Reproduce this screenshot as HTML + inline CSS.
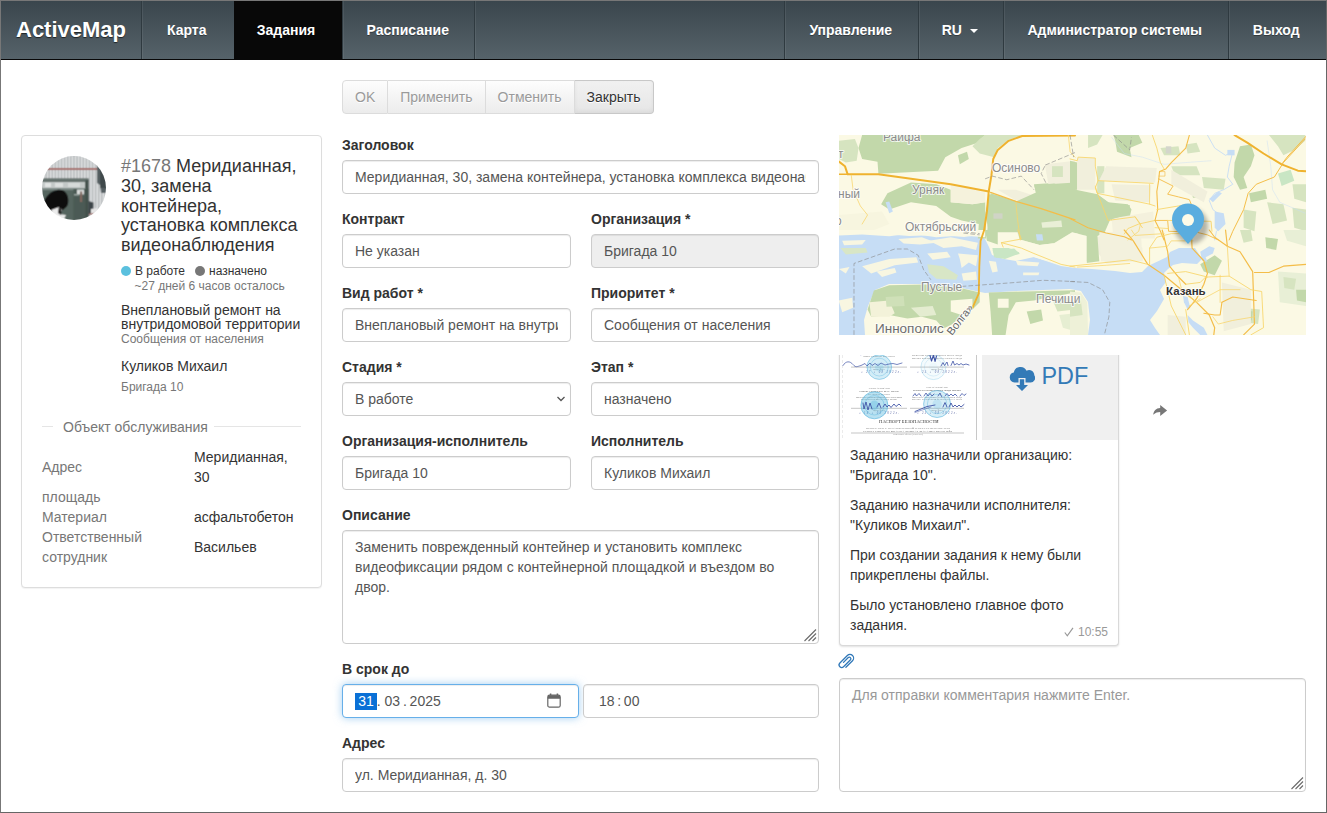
<!DOCTYPE html>
<html lang="ru">
<head>
<meta charset="utf-8">
<title>ActiveMap</title>
<style>
*{box-sizing:border-box}
html,body{margin:0;padding:0}
body{width:1327px;height:813px;overflow:hidden;position:relative;background:#fff;
 font-family:"Liberation Sans",Arial,sans-serif;font-size:14px;line-height:20px;color:#333}
#frame{position:absolute;left:0;top:0;width:1327px;height:813px;border:1px solid #777;border-right-color:#666;border-bottom-color:#666;pointer-events:none;z-index:50}
/* NAVBAR */
#nav{position:absolute;left:1px;top:1px;width:1325px;height:59px;border-bottom:1px solid #080808;
 background:linear-gradient(#3a464d 0%,#56636a 100%)}
#nav .brand{position:absolute;left:0;top:0;height:58px;width:141px;padding:0 0 0 15px;line-height:58px;
 font-size:22px;font-weight:bold;color:#fff;text-shadow:0 1px 1px rgba(0,0,0,.6)}
#nav .it{position:absolute;top:0;height:58px;padding-right:2.5px;line-height:58px;text-align:center;color:#fff;font-weight:bold;font-size:14px;
 border-left:1px solid #2f3a40;box-shadow:inset 1px 0 0 rgba(255,255,255,.07);text-shadow:0 1px 0 rgba(0,0,0,.35)}
#nav .it.act{background:#080808;box-shadow:none;border-left-color:#080808}
.caret{display:inline-block;width:0;height:0;margin-left:4px;vertical-align:middle;border-top:4px solid #fff;border-right:4px solid transparent;border-left:4px solid transparent}
/* BUTTONS */
#btns{position:absolute;left:342px;top:80px;height:34px;display:flex}
#btns .b{height:34px;line-height:32px;padding:0 12px;border:1px solid #ccc;border-left-width:0;font-size:14px;color:#333;
 background:linear-gradient(#fff 0%,#e0e0e0 100%);text-shadow:0 1px 0 #fff;white-space:nowrap}
#btns .b:first-child{border-left-width:1px;border-radius:4px 0 0 4px}
#btns .b:last-child{border-radius:0 4px 4px 0}
#btns .b.dis{color:#9a9a9a;background:linear-gradient(#fdfdfd 0%,#ececec 100%);border-color:#dcdcdc}
#btns .b.cl{background:linear-gradient(#f1f1f1,#e6e6e6);border-color:#c8c8c8;padding-right:13px;box-shadow:inset 0 -2px 4px rgba(0,0,0,.05)}
/* FORM */
.lbl{position:absolute;font-weight:bold;height:20px;line-height:20px;white-space:nowrap;color:#333}
.inp{position:absolute;height:34px;border:1px solid #ccc;border-radius:4px;background:#fff;padding:6px 12px;line-height:20px;color:#555;
 box-shadow:inset 0 1px 1px rgba(0,0,0,.075);white-space:nowrap;overflow:hidden}
.inp.ro{background:#eee}
.inp .c{display:block;overflow:hidden;white-space:nowrap;height:20px}

/* LEFT PANEL */
#lp{position:absolute;left:21px;top:135px;width:301px;height:453px;border:1px solid #ddd;border-radius:4px;background:#fff;box-shadow:0 1px 1px rgba(0,0,0,.05)}
#lp .t{position:absolute;white-space:nowrap}
#lp h4{position:absolute;left:99px;top:21px;margin:0;font-size:18px;line-height:19.8px;font-weight:normal;color:#333;white-space:nowrap}
#lp h4 span{color:#777}
.mut{color:#777}
.s12{font-size:12px}
.dot{display:inline-block;width:10px;height:10px;border-radius:50%;vertical-align:-1px;margin-right:4px}
#lp .lg{position:absolute;left:20px;top:282px;width:259px;height:20px}
#lp .lg i{position:absolute;top:8px;height:1px;background:#e5e5e5}
#lp .k{color:#777}

/* FORM extras */
.ta{position:absolute;border:1px solid #ccc;border-radius:4px;background:#fff;padding:6px 12px;line-height:20px;color:#555;box-shadow:inset 0 1px 1px rgba(0,0,0,.075)}
.grip{position:absolute;right:1px;bottom:1px;width:15px;height:15px}
.inp.foc{border-color:#66afe9;box-shadow:inset 0 1px 1px rgba(0,0,0,.075),0 0 8px rgba(102,175,233,.6)}
.sel{background:#0a70d6;color:#fff;display:inline-block;height:17px;line-height:17px;margin-top:2px;padding:0 3px;margin-left:0.2px;vertical-align:top}

/* RIGHT */
#bub{position:absolute;left:839px;top:345px;width:280px;height:301px;border:1px solid #d9d9d9;border-top:0;border-radius:0 0 4px 4px;background:#fff;box-shadow:0 1px 2px rgba(0,0,0,.12)}
#clipb{position:absolute;left:830px;top:355px;width:300px;height:300px;overflow:hidden}
#clipb #bub{left:9px;top:-10px}
#bub p{position:absolute;left:10px;margin:0;white-space:nowrap;color:#333;line-height:20px}
#bub .tm{position:absolute;right:10px;bottom:5px;font-size:12px;color:#999;line-height:16px}
#cmt{position:absolute;left:839px;top:678px;width:467px;height:114px;border:1px solid #ccc;border-radius:4px;background:#fff;box-shadow:inset 0 1px 1px rgba(0,0,0,.075);padding:6px 12px;color:#999;line-height:20px}
</style>
</head>
<body>
<div id="nav">
 <div class="brand">ActiveMap</div>
 <div class="it" style="left:140px;width:93px">Карта</div>
 <div class="it act" style="left:233px;width:108px;padding-right:5px">Задания</div>
 <div class="it" style="left:341px;width:133px">Расписание</div>
 <div class="it" style="left:473px;width:310px"></div>
 <div class="it" style="left:783px;width:135px">Управление</div>
 <div class="it" style="left:917px;width:85px">RU <span class="caret"></span></div>
 <div class="it" style="left:1002px;width:225px">Администратор системы</div>
 <div class="it" style="left:1227px;width:98px">Выход</div>
</div>

<div id="btns"><div class="b dis">OK</div><div class="b dis">Применить</div><div class="b dis">Отменить</div><div class="b cl">Закрыть</div></div>

<div id="lp">
 <svg style="position:absolute;left:20px;top:20px" width="64" height="64" viewBox="0 0 64 64">
  <defs><clipPath id="av"><circle cx="32" cy="32" r="32"/></clipPath>
  <filter id="bl" x="-10%" y="-10%" width="120%" height="120%"><feConvolveMatrix order="3" kernelMatrix="1 2 1 2 6 2 1 2 1" divisor="18" edgeMode="duplicate" preserveAlpha="true"/></filter></defs>
  <g clip-path="url(#av)"><g filter="url(#bl)">
   <rect x="-4" y="-4" width="72" height="72" fill="#b3b7b9"/>
   <path d="M2.5 0v64M5.6 0v64M8.7 0v64M11.8 0v64M14.9 0v64M18.0 0v64M21.1 0v64M24.2 0v64M27.3 0v64M30.400000000000002 0v64M33.5 0v64M36.6 0v64M39.7 0v64M42.800000000000004 0v64M45.9 0v64M49.0 0v64M52.1 0v64M55.2 0v64M58.300000000000004 0v64M61.4 0v64M64.5 0v64" stroke="#e4e6e7" stroke-width="1.5" fill="none"/>
   <rect x="5" y="12" width="51" height="2" fill="#a56b66"/>
   <path d="M55 9h10v28h-6l-1-8l-3-2z" fill="#566064"/>
   <rect x="58" y="14" width="6" height="18" fill="#3f484b"/>
   <rect x="0" y="22.5" width="46.5" height="44" fill="#55655f"/>
   <rect x="0" y="22.5" width="46.5" height="3" fill="#66736f"/>
   <rect x="0" y="26" width="43" height="6" fill="#c3c8c7"/>
   <rect x="3" y="27" width="6" height="4" fill="#e2e5e4"/><rect x="13" y="27" width="8" height="4" fill="#dde0df"/><rect x="26" y="27" width="12" height="4" fill="#d6dad9"/>
   <rect x="0" y="32" width="46.5" height="2.2" fill="#7d8a86"/>
   <rect x="31.5" y="33" width="15" height="32" fill="#4b5a55"/>
   <rect x="43.5" y="24" width="3" height="41" fill="#43504c"/>
   <rect x="35" y="33.5" width="7" height="5" fill="#d9dcdb"/>
   <rect x="38" y="35.5" width="2.2" height="10.5" fill="#80675f"/>
   <rect x="32" y="38" width="5" height="1.5" fill="#9aa5a1"/>
   <path d="M46.5 45l5 1.5v11l-5 1z" fill="#3d4548"/>
   <path d="M49 53l6-1l1 4l-7 2z" fill="#e6e6e6"/>
   <rect x="47" y="57.500" width="8" height="1.200" fill="#b0736c"/>
   <path d="M0 60 C-1 48 4 36 15 34 C24 32.500 27.500 40 26 48 C25 52 20 54 18 56 L23 66 L0 66Z" fill="#0d0d0e"/>
   <path d="M9 54l8-3l3 3l-3 4l7 1l-2 4l-9-1z" fill="#ececec"/>
   <path d="M17 50c2 2 3 5 2 9l-3-2z" fill="#1a1a1a"/>
  </g></g>
 </svg>
 <h4><span>#1678</span> Меридианная,<br>30, замена<br>контейнера,<br>установка комплекса<br>видеонаблюдения</h4>
 <div class="t s12" style="left:99px;top:125px;color:#333"><span class="dot" style="background:#5bc0de"></span>В работе</div>
 <div class="t s12" style="left:173px;top:125px;color:#333"><span class="dot" style="background:#777"></span>назначено</div>
 <div class="t s12 mut" style="left:112.500px;top:140px">~27 дней 6 часов осталось</div>
 <div class="t" style="left:99px;top:167px;line-height:14px">Внеплановый ремонт на<br>внутридомовой территории</div>
 <div class="t s12 mut" style="left:99px;top:193px">Сообщения от населения</div>
 <div class="t" style="left:99px;top:220px">Куликов Михаил</div>
 <div class="t s12 mut" style="left:99px;top:241px">Бригада 10</div>
 <div class="lg"><i style="left:0;width:11px"></i><i style="left:172px;width:87px"></i><div class="t mut" style="left:21px;top:-1px">Объект обслуживания</div></div>
 <div class="t k" style="left:20px;top:321px">Адрес</div>
 <div class="t" style="left:172px;top:311px">Меридианная,<br>30</div>
 <div class="t k" style="left:20px;top:351px">площадь</div>
 <div class="t k" style="left:20px;top:371px">Материал</div>
 <div class="t" style="left:172px;top:371px">асфальтобетон</div>
 <div class="t k" style="left:20px;top:391px">Ответственный<br>сотрудник</div>
 <div class="t" style="left:172px;top:401px">Васильев</div>
</div>

<div class="lbl" style="left:342px;top:135px">Заголовок</div>
<div class="inp" style="left:342px;top:160px;width:477px"><span class="c">Меридианная, 30, замена контейнера, установка комплекса видеонаблюдения</span></div>
<div class="lbl" style="left:342px;top:209px">Контракт</div>
<div class="inp" style="left:342px;top:234px;width:229px"><span class="c">Не указан</span></div>
<div class="lbl" style="left:591px;top:209px">Организация *</div>
<div class="inp ro" style="left:591px;top:234px;width:228px"><span class="c">Бригада 10</span></div>
<div class="lbl" style="left:342px;top:283px">Вид работ *</div>
<div class="inp" style="left:342px;top:308px;width:229px"><span class="c">Внеплановый ремонт на внутридомовой территории</span></div>
<div class="lbl" style="left:591px;top:283px">Приоритет *</div>
<div class="inp" style="left:591px;top:308px;width:228px"><span class="c">Сообщения от населения</span></div>
<div class="lbl" style="left:342px;top:357px">Стадия *</div>
<div class="inp" style="left:342px;top:382px;width:229px">В работе<svg style="position:absolute;right:4px;top:12px" width="10" height="8" viewBox="0 0 10 8"><path d="M1.500 2L5 5.500L8.500 2" stroke="#555" stroke-width="1.300" fill="none"/></svg></div>
<div class="lbl" style="left:591px;top:357px">Этап *</div>
<div class="inp" style="left:591px;top:382px;width:228px"><span class="c">назначено</span></div>
<div class="lbl" style="left:342px;top:431px">Организация-исполнитель</div>
<div class="inp" style="left:342px;top:456px;width:229px"><span class="c">Бригада 10</span></div>
<div class="lbl" style="left:591px;top:431px">Исполнитель</div>
<div class="inp" style="left:591px;top:456px;width:228px"><span class="c">Куликов Михаил</span></div>
<div class="lbl" style="left:342px;top:505px">Описание</div>
<div class="ta" style="left:342px;top:530px;width:477px;height:114px">Заменить поврежденный контейнер и установить комплекс<br>видеофиксации рядом с контейнерной площадкой и въездом во<br>двор.<svg class="grip" viewBox="0 0 15 15"><path d="M2.500 14L14 2.500M6.500 14L14 6.500M10.500 14L14 10.500" stroke="#6b6b6b" stroke-width="1.100" fill="none"/></svg></div>
<div class="lbl" style="left:342px;top:659px">В срок до</div>
<div class="inp foc" style="left:342px;top:684px;width:237px"><span class="sel">31</span>.<span style="margin-left:3.800px">03</span><span style="margin-left:3px">.</span><span style="margin-left:2.700px">2025</span><svg style="position:absolute;left:203px;top:7px" width="16" height="18" viewBox="0 0 16 18"><path d="M4.600 1.500v2.500M11.400 1.500v2.500" stroke="#666" stroke-width="1.500" fill="none"/><rect x="1.800" y="3.200" width="12.400" height="12" rx="1.800" fill="#fff" stroke="#666" stroke-width="1.200"/><path d="M1.800 6.800V5A1.800 1.800 0 0 1 3.600 3.200H12.400A1.800 1.800 0 0 1 14.200 5V6.800Z" fill="#666"/></svg></div>
<div class="inp" style="left:583px;top:684px;width:236px;padding-left:15px">18<span style="margin-left:2.700px">:</span><span style="margin-left:2.700px">00</span></div>
<div class="lbl" style="left:342px;top:733px">Адрес</div>
<div class="inp" style="left:342px;top:758px;width:477px"><span class="c">ул. Меридианная, д. 30</span></div>

<!--MAPSTART--><svg id="map" style="position:absolute;left:839px;top:135px" width="467" height="200" viewBox="0 0 467 200" font-family="Liberation Sans, Arial, sans-serif">
<defs><clipPath id="mc"><rect width="467" height="200"/></clipPath>
<filter id="ps" x="-40%" y="-40%" width="180%" height="180%"><feGaussianBlur stdDeviation="2"/></filter>
<filter id="mb" x="-5%" y="-5%" width="110%" height="110%"><feGaussianBlur stdDeviation="0.35"/></filter></defs>
<g clip-path="url(#mc)"><g filter="url(#mb)">
<rect width="467" height="200" fill="#fbf9e4"/>
<path fill="#c6ddf5" d="M0 97L20 96L45 99L70 101L100 100L125 102L140 100L146 104L150 112L153 120L165 124L177 126L195 122L210 127L222 131L236 133L253 134L276 136L291 138L303 137L309 131L328 122L331 117L340 113L356 113L363 124L358 129L343 128L334 130L329 134L325 138L327 147L321 155L325 164L318 176L311 185L316 193L321 200L249 200L251 185L249 167L242 156L231 154L177 156L146 158L123 153L86 149L50 149L36 155L29 171L25 185L26 200L0 200Z"/>
<g transform="translate(-4,-5) scale(0.18086)"><path d="M150 28 830 28 790 70 700 100 610 150 570 225 240 242 235 175 150 160 130 100Z" fill="#c2d8aa" /><path d="M830 28 1035 28 960 55 900 100 880 150 800 130 760 90 800 50Z" fill="#d6e4c0" /><path d="M680 140 730 120 740 160 690 190Z" fill="#c2d8aa" /><path d="M22 60 110 50 130 100 120 170 60 180 22 160Z" fill="#d6e4c0" /><path d="M290 350 420 290 560 300 640 330 640 400 760 410 830 400 835 600 790 600 795 520 700 500 640 480 560 420 420 400 300 440 255 410Z" fill="#c2d8aa" /><path d="M860 350 1000 392 1130 432 1327 500 1327 608 840 608 845 500Z" fill="#c2d8aa" /><path d="M860 530 1000 515 1120 565 1140 608 850 608Z" fill="#fbf9e4" /><path d="M1040 470 1130 500 1110 540 1030 510Z" fill="#fbf9e4" /><path d="M880 460 920 460 920 490 880 490Z" fill="#cfd3c4" /><path d="M1100 300 1327 285 1327 490 1130 425Z" fill="#c2d8aa" /><path d="M1160 190 1327 170 1327 290 1180 300Z" fill="#f1efdc" /><path d="M1200 200 1260 200 1260 260 1200 260Z" fill="#d6e4c0" /><path d="M900 330 1000 330 1090 360 1120 420 1000 390Z" fill="#f1efdc" /><path d="M640 300 830 345 830 400 760 410 640 400Z" fill="#f5f2dc" /><path d="M22 470 260 450 300 520 200 560 22 560Z" fill="#f7f5df" /><path d="M280 400 300 395 320 450 300 460Z" fill="#c6ddf5" /></g>
<g transform="translate(231,-5) scale(0.18086)"><path d="M0 340 150 355 210 400 320 410 340 440 330 480 230 500 200 470 120 520 60 560 0 580Z" fill="#c2d8aa" /><path d="M0 170 40 180 40 330 0 335Z" fill="#c2d8aa" /><path d="M150 200 190 200 190 350 150 350Z" fill="#d6e4c0" /><path d="M240 28 380 28 400 70 330 100 340 150 260 120 250 60Z" fill="#c2d8aa" /><path d="M100 28 180 28 150 80 100 100Z" fill="#d6e4c0" /><path d="M500 100 600 90 610 140 520 140Z" fill="#d6e4c0" /><path d="M530 90 560 90 560 130 530 130Z" fill="#d4d6cc" /><path d="M560 200 700 200 720 250 580 250Z" fill="#d6e4c0" /><path d="M730 260 860 270 850 330 740 320Z" fill="#d6e4c0" /><path d="M670 335 730 330 730 370 680 375Z" fill="#c2d8aa" /><path d="M940 90 1000 80 1020 140 1000 200 960 260 980 320 940 330 905 260 910 180Z" fill="#c2d8aa" /><path d="M1100 28 1300 28 1300 60 1240 110 1180 140 1150 90Z" fill="#d6e4c0" /><path d="M1150 240 1220 220 1240 280 1170 310Z" fill="#c9e6c4" /><path d="M990 350 1080 330 1090 380 1000 400Z" fill="#c2d8aa" /><path d="M960 440 1030 450 1020 560 960 540Z" fill="#d6e4c0" /><path d="M1090 400 1180 410 1200 500 1120 520Z" fill="#d6e4c0" /><path d="M1230 430 1305 440 1305 560 1240 540Z" fill="#d6e4c0" /><path d="M640 80 700 70 720 120 650 130Z" fill="#d6e4c0" /><path d="M1230 300 1305 300 1305 400 1240 380Z" fill="#d6e4c0" /><path d="M40 150 140 155 140 330 40 330Z" fill="#f1efdc" /><path d="M200 200 480 210 470 290 160 280Z" fill="#f1efdc" /><path d="M230 300 450 305 440 400 250 390Z" fill="#f1efdc" /><path d="M560 220 760 340 740 400 560 300Z" fill="#f1efdc" /><path d="M230 490 460 450 470 600 240 600Z" fill="#f4f1dd" /><path d="M800 450 850 460 860 520 820 560 800 540Z" fill="#c6ddf5" /><path d="M870 110 910 110 910 140 870 140Z" fill="#c6ddf5" /><path d="M770 380 820 340 840 350 790 400Z" fill="#c6ddf5" /></g>
<g transform="translate(-4,95) scale(0.18086)"><path d="M22 0 830 0 830 40 700 30 560 40 420 20 300 35 150 25 22 30Z" fill="#fbf9e4" /><path d="M350 50 480 40 560 70 470 80 380 75Z" fill="#f8f6e1" /><path d="M520 60 640 40 790 70 780 110 700 90 600 100Z" fill="#f8f6e1" /><path d="M150 200 300 160 450 150 460 180 330 195 200 240Z" fill="#f8f6e1" /><path d="M230 230 330 210 340 235 260 260Z" fill="#f8f6e1" /><path d="M510 130 620 120 640 150 540 165Z" fill="#f8f6e1" /><path d="M680 130 790 140 780 200 740 180 700 210 690 160Z" fill="#f8f6e1" /><path d="M700 240 780 230 785 275 710 280Z" fill="#f8f6e1" /><path d="M40 60 170 55 150 80 50 85Z" fill="#f8f6e1" /><path d="M850 170 890 175 900 230 870 235Z" fill="#f8f6e1" /><path d="M1000 170 1130 180 1120 200 1010 195Z" fill="#f8f6e1" /><path d="M1040 235 1130 235 1125 250 1040 250Z" fill="#f8f6e1" /><path d="M20 390 95 375 100 430 40 455Z" fill="#f8f6e1" /><path d="M22 215 80 205 60 240Z" fill="#f8f6e1" /><path d="M510 190 600 200 680 250 670 275 560 270 520 235Z" fill="#d8e6c6" /><path d="M30 100 170 100 180 125 60 135Z" fill="#d8e6c6" /><path d="M215 335 300 305 500 302 700 322 800 345 800 400 760 440 700 470 650 520 600 545 560 500 480 480 400 490 300 470 200 480 180 440Z" fill="#c2d8aa" /><path d="M190 400 300 390 330 460 300 480 200 480Z" fill="#f3f2d9" /><path d="M280 370 380 365 385 420 285 425Z" fill="#cfe0b8" /><path d="M640 390 760 380 760 440 700 470 640 450Z" fill="#fbf9e4" /><path d="M420 430 540 420 560 470 470 480Z" fill="#e4ecd0" /><path d="M850 345 1327 333 1327 345 1100 390 1000 400 960 470 940 600 870 600 860 450Z" fill="#c2d8aa" /><path d="M900 380 960 380 960 430 900 430Z" fill="#fbf9e4" /><path d="M1060 450 1140 440 1150 500 1080 520Z" fill="#c2d8aa" /><path d="M1200 380 1327 370 1327 440 1230 450Z" fill="#d6e4c0" /><path d="M1240 470 1327 460 1327 560 1260 540Z" fill="#e6eed2" /><path d="M870 100 1010 100 1020 130 940 160 880 150Z" fill="#c9e6c4" /><path d="M1105 25 1150 25 1150 70 1105 70Z" fill="#c6ddf5" /><path d="M1190 0 1327 0 1327 120 1250 140 1200 60Z" fill="#d6e4c0" /><path d="M1000 0 1100 0 1100 80 1040 90Z" fill="#f1efdc" /><path d="M830 0 900 0 900 80 840 60Z" fill="#c2d8aa" /></g>
<g transform="translate(231,95) scale(0.18086)"><path d="M0 30 60 20 150 60 160 110 120 170 0 185Z" fill="#d6e4c0" /><path d="M130 40 300 20 400 100 400 170 200 185 150 120Z" fill="#f1efdc" /><path d="M190 100 260 110 250 150 200 160Z" fill="#d6e4c0" /><path d="M0 340 60 345 95 400 100 580 0 580Z" fill="#eef1d8" /><path d="M0 400 60 390 70 470 0 480Z" fill="#d6e4c0" /><path d="M720 190 800 140 840 170 800 250 740 230Z" fill="#c2d8aa" /><path d="M1080 40 1150 50 1140 110 1085 100Z" fill="#c2d8aa" /><path d="M1150 230 1305 240 1305 420 1160 400Z" fill="#e8efd6" /><path d="M1180 260 1250 270 1240 330 1185 320Z" fill="#d6e4c0" /><path d="M1250 330 1305 330 1305 400 1255 390Z" fill="#c2d8aa" /><path d="M950 430 1050 440 1040 520 960 510Z" fill="#d6e4c0" /><path d="M960 440 1010 450 1005 500 965 490Z" fill="#c2d8aa" /><path d="M940 0 1000 0 1010 60 960 70Z" fill="#d6e4c0" /><path d="M1180 0 1305 0 1305 90 1200 60Z" fill="#e8efd6" /><path d="M840 290 1000 330 1000 520 850 560Z" fill="#f1efdc" /><path d="M540 470 640 480 640 580 540 580Z" fill="#f1efdc" /><path d="M625 365 650 370 665 430 650 440 630 400Z" fill="#c6ddf5" /><path d="M650 470 680 500 740 540 760 580 720 580 680 540 655 510Z" fill="#c6ddf5" /><path d="M720 120 770 90 800 100 790 130 750 150 760 175 730 170Z" fill="#c6ddf5" /><path d="M330 75 350 70 355 110 335 110Z" fill="#c6ddf5" /></g>
<g transform="translate(121,25) scale(0.18086)"><path d="M160 190 310 230 420 180 410 140 520 130 620 160 760 190 830 240 940 250 930 300 830 330 800 400 760 420 770 560 700 570 700 420 620 400 520 460 440 470 330 440 320 400 160 400 140 300Z" fill="#c2d8aa" /><path d="M230 440 330 440 440 470 520 460 620 400 700 420 700 570 560 580 350 520 230 470Z" fill="#fbf9e4" /><path d="M770 400 1000 400 1010 560 780 560Z" fill="#f3f1dd" /><path d="M450 345 560 335 565 370 455 375Z" fill="#e9efd6" /><path d="M420 410 455 410 460 445 425 445Z" fill="#c6ddf5" /><path d="M185 295 235 295 235 325 185 325Z" fill="#d0d4c6" /><path d="M180 500 300 490 330 520 200 540Z" fill="#c9e6c4" /></g>
<g transform="translate(-4,-5) scale(0.18086)"><path d="M22 175 55 200 70 245 240 245 420 270 640 300 850 340" fill="none" stroke="#efb22e" stroke-width="11" stroke-linejoin="round" stroke-linecap="round" /><path d="M22 245 70 245" fill="none" stroke="#efb22e" stroke-width="9" stroke-linejoin="round" stroke-linecap="round" /><path d="M1327 30 1035 33 960 60 900 110 875 160 865 250 850 340 840 450 825 553" fill="none" stroke="#efb22e" stroke-width="11" stroke-linejoin="round" stroke-linecap="round" /><path d="M860 345 1000 395 1140 435 1327 497" fill="none" stroke="#f4bd48" stroke-width="7" stroke-linejoin="round" stroke-linecap="round" /><path d="M1000 400 1010 500 1025 608" fill="none" stroke="#f8d56a" stroke-width="4.2" stroke-linejoin="round" stroke-linecap="round" /><path d="M90 250 100 330 140 420 180 470 150 520" fill="none" stroke="#f8d56a" stroke-width="4.2" stroke-linejoin="round" stroke-linecap="round" /><path d="M1290 28 1300 120 1327 150" fill="none" stroke="#f8d56a" stroke-width="4.2" stroke-linejoin="round" stroke-linecap="round" /><path d="M830 270 870 255 950 275 1030 255 1100 330" fill="none" stroke="#8a8a8a" stroke-width="3.4" stroke-dasharray="26 12" stroke-linejoin="round"/><path d="M1160 200 1140 240 1170 300" fill="none" stroke="#8a8a8a" stroke-width="3.4" stroke-dasharray="26 12" stroke-linejoin="round"/><path d="M1327 125 1160 195" fill="none" stroke="#8a8a8a" stroke-width="3.4" stroke-dasharray="26 12" stroke-linejoin="round"/><path d="M710 570 800 580" fill="none" stroke="#8a8a8a" stroke-width="3.4" stroke-dasharray="26 12" stroke-linejoin="round"/></g>
<g transform="translate(231,-5) scale(0.18086)"><path d="M760 28 800 100 860 140 900 120 880 200 870 260 900 300 850 330 800 350 770 390 790 440 830 470 850 520 810 560 800 608" fill="none" stroke="#c6ddf5" stroke-width="5" stroke-linejoin="round" stroke-linecap="round" /><path d="M1090 60 1110 200 1120 330 1160 400 1300 460" fill="none" stroke="#c6ddf5" stroke-width="2.5" stroke-linejoin="round" stroke-linecap="round" /><path d="M230 40 300 130 400 150 520 190 640 180 780 170" fill="none" stroke="#c6ddf5" stroke-width="2.5" stroke-linejoin="round" stroke-linecap="round" /><path d="M455 28 480 100 500 180 520 215" fill="none" stroke="#f8d56a" stroke-width="4.8" stroke-linejoin="round" stroke-linecap="round" /><path d="M660 28 640 100 560 180 530 215 495 230 490 280 480 340 485 440 470 500 500 560 520 608" fill="none" stroke="#f4bd48" stroke-width="6" stroke-linejoin="round" stroke-linecap="round" /><path d="M495 230 525 230 525 255 492 255" fill="none" stroke="#f4bd48" stroke-width="3.5" stroke-linejoin="round" stroke-linecap="round" /><path d="M0 160 40 170 45 150 140 155 140 200 155 280 460 295" fill="none" stroke="#f8d56a" stroke-width="4.8" stroke-linejoin="round" stroke-linecap="round" /><path d="M140 310 150 350 440 410 470 420" fill="none" stroke="#f8d56a" stroke-width="4.8" stroke-linejoin="round" stroke-linecap="round" /><path d="M155 280 140 320 210 500 360 480 400 540" fill="none" stroke="#f8d56a" stroke-width="4.8" stroke-linejoin="round" stroke-linecap="round" /><path d="M440 300 440 410" fill="none" stroke="#f8d56a" stroke-width="4.2" stroke-linejoin="round" stroke-linecap="round" /><path d="M490 270 570 310 540 355 600 370 660 385 670 410" fill="none" stroke="#f4bd48" stroke-width="5" stroke-linejoin="round" stroke-linecap="round" /><path d="M480 440 600 420 670 410" fill="none" stroke="#f8d56a" stroke-width="4.8" stroke-linejoin="round" stroke-linecap="round" /><path d="M1300 50 1180 180 1130 260 1030 300 985 350 960 440 900 560 880 608" fill="none" stroke="#f4bd48" stroke-width="5.5" stroke-linejoin="round" stroke-linecap="round" /><path d="M910 28 980 70 1070 130 1170 190 1260 225 1305 228" fill="none" stroke="#efb22e" stroke-width="11" stroke-linejoin="round" stroke-linecap="round" /><path d="M1170 190 1200 150 1305 35" fill="none" stroke="#f4bd48" stroke-width="5.5" stroke-linejoin="round" stroke-linecap="round" /><path d="M0 490 100 540 200 570 300 590 340 608" fill="none" stroke="#f4bd48" stroke-width="6" stroke-linejoin="round" stroke-linecap="round" /><path d="M300 575 320 545 380 520 470 500" fill="none" stroke="#f8d56a" stroke-width="4.8" stroke-linejoin="round" stroke-linecap="round" /><path d="M470 500 540 500 545 560 700 565 760 580 820 608" fill="none" stroke="#f4bd48" stroke-width="5" stroke-linejoin="round" stroke-linecap="round" /><path d="M540 500 780 505 785 560" fill="none" stroke="#f8d56a" stroke-width="4.8" stroke-linejoin="round" stroke-linecap="round" /><path d="M470 540 545 545" fill="none" stroke="#f8d56a" stroke-width="4.2" stroke-linejoin="round" stroke-linecap="round" /><path d="M360 480 390 520 380 560 320 608" fill="none" stroke="#f8d56a" stroke-width="4.2" stroke-linejoin="round" stroke-linecap="round" /><path d="M0 28 20 150" fill="none" stroke="#8a8a8a" stroke-width="3.4" stroke-dasharray="26 12" stroke-linejoin="round"/><path d="M240 28 330 110 340 40" fill="none" stroke="#8a8a8a" stroke-width="3.4" stroke-dasharray="26 12" stroke-linejoin="round"/></g>
<g transform="translate(-4,95) scale(0.18086)"><path d="M825 0 805 60 798 200 795 350 760 430" fill="none" stroke="#efb22e" stroke-width="10" stroke-linejoin="round" stroke-linecap="round" /><path d="M920 70 1030 100 1100 130 1250 190 1327 205" fill="none" stroke="#f8d56a" stroke-width="4.8" stroke-linejoin="round" stroke-linecap="round" /><path d="M1010 0 1030 50 920 70 930 95" fill="none" stroke="#f8d56a" stroke-width="4.8" stroke-linejoin="round" stroke-linecap="round" /><path d="M105 580 105 185 330 105 400 105 460 140 490 220 530 275" fill="none" stroke="#8a8a8a" stroke-width="3.4" stroke-dasharray="26 12" stroke-linejoin="round"/><path d="M700 312 1000 290 1150 278 1327 285" fill="none" stroke="#8a8a8a" stroke-width="3.4" stroke-dasharray="26 12" stroke-linejoin="round"/><path d="M715 10 800 20" fill="none" stroke="#8a8a8a" stroke-width="3.4" stroke-dasharray="26 12" stroke-linejoin="round"/></g>
<g transform="translate(231,95) scale(0.18086)"><path d="M300 0 350 60 430 190 520 250 580 300 700 400 770 470 800 540 795 580" fill="none" stroke="#f4bd48" stroke-width="6.5" stroke-linejoin="round" stroke-linecap="round" /><path d="M510 0 540 120 550 200 600 260 640 300" fill="none" stroke="#f4bd48" stroke-width="6.5" stroke-linejoin="round" stroke-linecap="round" /><path d="M670 0 675 100 740 170 760 240 740 300 700 380 650 440" fill="none" stroke="#f4bd48" stroke-width="6.5" stroke-linejoin="round" stroke-linecap="round" /><path d="M860 0 870 90 940 120 1010 230 1020 520 960 580" fill="none" stroke="#f4bd48" stroke-width="6.5" stroke-linejoin="round" stroke-linecap="round" /><path d="M1020 235 1100 235 1180 200 1305 190" fill="none" stroke="#f4bd48" stroke-width="6.5" stroke-linejoin="round" stroke-linecap="round" /><path d="M0 200 150 185 330 165 430 190" fill="none" stroke="#f8d56a" stroke-width="4.8" stroke-linejoin="round" stroke-linecap="round" /><path d="M40 205 200 195 330 185" fill="none" stroke="#f8d56a" stroke-width="4.2" stroke-linejoin="round" stroke-linecap="round" /><path d="M440 190 440 100 480 40 560 20 700 20" fill="none" stroke="#f8d56a" stroke-width="4.8" stroke-linejoin="round" stroke-linecap="round" /><path d="M760 260 880 255 1000 330 1060 340 1070 540 1000 580" fill="none" stroke="#f8d56a" stroke-width="4.8" stroke-linejoin="round" stroke-linecap="round" /><path d="M840 400 900 370 1030 390" fill="none" stroke="#f4bd48" stroke-width="6" stroke-linejoin="round" stroke-linecap="round" /><path d="M840 400 830 470 800 470 740 460" fill="none" stroke="#f4bd48" stroke-width="6" stroke-linejoin="round" stroke-linecap="round" /><path d="M540 240 640 230 760 260" fill="none" stroke="#f8d56a" stroke-width="4.8" stroke-linejoin="round" stroke-linecap="round" /><path d="M520 250 560 420 640 580" fill="none" stroke="#f8d56a" stroke-width="4.8" stroke-linejoin="round" stroke-linecap="round" /><path d="M640 300 720 290 750 260" fill="none" stroke="#f8d56a" stroke-width="4.8" stroke-linejoin="round" stroke-linecap="round" /><path d="M660 420 720 380" fill="none" stroke="#f8d56a" stroke-width="4.2" stroke-linejoin="round" stroke-linecap="round" /><path d="M640 440 660 580" fill="none" stroke="#f8d56a" stroke-width="4.8" stroke-linejoin="round" stroke-linecap="round" /><path d="M340 0 360 30 520 20" fill="none" stroke="#f8d56a" stroke-width="4.2" stroke-linejoin="round" stroke-linecap="round" /><path d="M440 100 540 90 560 60 680 60" fill="none" stroke="#f8d56a" stroke-width="4.2" stroke-linejoin="round" stroke-linecap="round" /><path d="M770 0 800 40 870 90" fill="none" stroke="#f4bd48" stroke-width="6" stroke-linejoin="round" stroke-linecap="round" /><path d="M830 250 830 400" fill="none" stroke="#f8d56a" stroke-width="4.2" stroke-linejoin="round" stroke-linecap="round" /><path d="M880 255 870 90" fill="none" stroke="#f8d56a" stroke-width="4.2" stroke-linejoin="round" stroke-linecap="round" /><path d="M700 400 830 330 940 330" fill="none" stroke="#f8d56a" stroke-width="4.2" stroke-linejoin="round" stroke-linecap="round" /><path d="M600 260 620 340 700 400" fill="none" stroke="#f8d56a" stroke-width="4.2" stroke-linejoin="round" stroke-linecap="round" /><path d="M790 480 820 520 900 500 1020 480" fill="none" stroke="#f8d56a" stroke-width="4.2" stroke-linejoin="round" stroke-linecap="round" /><path d="M0 285 100 290 180 330 220 400 215 480 190 580" fill="none" stroke="#8a8a8a" stroke-width="3.4" stroke-dasharray="26 12" stroke-linejoin="round"/></g>
<g transform="translate(121,25) scale(0.18086)"></g>
</g>
<text x="44" y="6" font-size="12" fill="#8c8c8c" font-weight="normal" stroke="#fff" stroke-width="2" stroke-opacity=".75" paint-order="stroke" stroke-linejoin="round" >Раифа</text>
<text x="153" y="37" font-size="12" fill="#8c8c8c" font-weight="normal" stroke="#fff" stroke-width="2" stroke-opacity=".75" paint-order="stroke" stroke-linejoin="round" >Осиново</text>
<text x="73" y="59" font-size="12" fill="#8c8c8c" font-weight="normal" stroke="#fff" stroke-width="2" stroke-opacity=".75" paint-order="stroke" stroke-linejoin="round" >Урняк</text>
<text x="-9" y="63" font-size="12" fill="#8c8c8c" font-weight="normal" stroke="#fff" stroke-width="2" stroke-opacity=".75" paint-order="stroke" stroke-linejoin="round" >жный</text>
<text x="-1" y="23" font-size="12" fill="#8c8c8c" font-weight="normal" stroke="#fff" stroke-width="2" stroke-opacity=".75" paint-order="stroke" stroke-linejoin="round" >т</text>
<text x="-4" y="90" font-size="12" fill="#8c8c8c" font-weight="normal" stroke="#fff" stroke-width="2" stroke-opacity=".75" paint-order="stroke" stroke-linejoin="round" >о</text>
<text x="66" y="96" font-size="12" fill="#8c8c8c" font-weight="normal" stroke="#fff" stroke-width="2" stroke-opacity=".75" paint-order="stroke" stroke-linejoin="round" >Октябрьский</text>
<text x="82" y="156" font-size="12" fill="#8c8c8c" font-weight="normal" stroke="#fff" stroke-width="2" stroke-opacity=".75" paint-order="stroke" stroke-linejoin="round" >Пустые</text>
<text x="197" y="168" font-size="12" fill="#8c8c8c" font-weight="normal" stroke="#fff" stroke-width="2" stroke-opacity=".75" paint-order="stroke" stroke-linejoin="round" >Печищи</text>
<text x="327" y="160" font-size="11.5" fill="#333" font-weight="bold" stroke="#fff" stroke-width="2" stroke-opacity=".75" paint-order="stroke" stroke-linejoin="round" >Казань</text>
<text x="36" y="198" font-size="13.5" fill="#6e6e6e" font-weight="normal" stroke="#fff" stroke-width="2" stroke-opacity=".75" paint-order="stroke" stroke-linejoin="round" >Иннополис</text>
<text x="0" y="0" font-size="11" fill="#666" font-weight="normal" stroke="#fff" stroke-width="2" stroke-opacity=".75" paint-order="stroke" stroke-linejoin="round" transform="translate(113,201) rotate(-52)">Волга»</text>
<ellipse cx="352" cy="91" rx="17" ry="18" fill="#000" opacity=".28" filter="url(#ps)"/>
<path d="M349 109 L335.800 93.500 A16 16 0 1 1 362.200 93.500 Z" fill="#5aaddf"/><circle cx="349" cy="85" r="6" fill="#fdfbe8"/>
</g></svg><!--MAPEND-->
<div id="clipb"><div id="bub">
 <svg style="position:absolute;left:1px;top:10px" width="137" height="85" viewBox="0 0 137 85"><!--DOC--><defs><filter id="db" x="-5%" y="-5%" width="110%" height="110%"><feGaussianBlur stdDeviation="0.3"/></filter></defs><rect width="137" height="85" fill="#fff"/><g filter="url(#db)" font-family="Liberation Serif, serif" text-anchor="middle" fill="#444"><path d="M1.500 0V85" stroke="#e6e6e6" stroke-width=".8" stroke-dasharray="3 2"/><text x="38" y="1.6" font-size="2.2" textLength="32" fill="#666">главное управление МЧС России</text><text x="96" y="1.2" font-size="2.1" textLength="50" fill="#555">префектура административного округа города</text><text x="96" y="3.6" font-size="2.1" textLength="50" fill="#555">Москвы Управа Ленинского района города</text><path d="M10 12.1H66M69 12.1H123" stroke="#8a8a8a" stroke-width=".5"/><path d="M10 53.3H66M69 53.3H123" stroke="#8a8a8a" stroke-width=".5"/><path d="M10 78H123" stroke="#8a8a8a" stroke-width=".5"/><text x="38" y="14.6" font-size="1.8" fill="#777">подпись                      Ф.И.О.</text><text x="96" y="14.6" font-size="1.8" fill="#777">подпись                      Ф.И.О.</text><text x="38" y="55.8" font-size="1.8" fill="#777">подпись                      Ф.И.О.</text><text x="96" y="55.8" font-size="1.8" fill="#777">подпись                      Ф.И.О.</text><text x="40" y="18.2" font-size="3" textLength="40" fill="#5560a0" font-style="italic">« 27 »    08    2022г.</text><text x="96" y="18.2" font-size="3" textLength="40" fill="#5560a0" font-style="italic">« 25 »    08    2022г.</text><text x="38" y="59.4" font-size="3" textLength="40" fill="#5560a0" font-style="italic">« 18 »    08    2022г.</text><text x="96" y="59.4" font-size="3" textLength="40" fill="#5560a0" font-style="italic">« 25 »    08    2022г.</text><text x="38.3" y="34" font-size="2.4" textLength="21">СОГЛАСОВАНО</text><text x="96" y="33" font-size="2.4" textLength="21">СОГЛАСОВАНО</text><text x="38" y="37.3" font-size="2.6" textLength="40">Главное управление МЧС России</text><text x="96" y="36.4" font-size="2.6" textLength="48">Управа Ленинского района города Москвы</text><text x="38" y="40.3" font-size="2.4" textLength="22" fill="#666">по городу Москве</text><text x="38" y="43.2" font-size="2" textLength="46" fill="#666">заместитель начальника управления МЧС России майор</text><text x="38" y="45.4" font-size="2" textLength="36" fill="#666">внутренней службы по городу Москве</text><text x="96" y="43.2" font-size="2" textLength="50" fill="#666">заместитель главы управы Ленинского района города</text><text x="96" y="45.4" font-size="2" textLength="50" fill="#666">Москвы по вопросам безопасности и связи</text><text x="67.8" y="67.7" font-size="4.6" textLength="59.500" fill="#333">ПАСПОРТ БЕЗОПАСНОСТИ</text><text x="67" y="73.6" font-size="2.8" textLength="84" fill="#555">ОБЩЕСТВО С ОГРАНИЧЕННОЙ ОТВЕТСТВЕННОСТЬЮ</text><text x="66.6" y="76.8" font-size="2.8" textLength="89" fill="#444">«СОЮЗ СВЯТОГО ИОАННА ВОИНА» МАГАЗИН «ВЕРНЫЙ»</text><text x="67" y="79.6" font-size="1.7" textLength="30" fill="#777">наименование объекта (территории)</text><circle cx="38.3" cy="12.1" r="12.3" fill="#4db3dc" fill-opacity="0.24" stroke="#58b4dd" stroke-opacity="0.6" stroke-width=".9"/><circle cx="38.3" cy="12.1" r="8.9" fill="none" stroke="#58b4dd" stroke-opacity="0.6" stroke-width=".6"/><circle cx="38.3" cy="12.1" r="4.3" fill="#4db3dc" fill-opacity="0.19"/><circle cx="92.4" cy="12.1" r="12.5" fill="#4db3dc" fill-opacity="0.06" stroke="#58b4dd" stroke-opacity="0.3" stroke-width=".9"/><circle cx="92.4" cy="12.1" r="9.0" fill="none" stroke="#58b4dd" stroke-opacity="0.3" stroke-width=".6"/><circle cx="92.4" cy="12.1" r="4.4" fill="#4db3dc" fill-opacity="0.05"/><circle cx="33.4" cy="50.3" r="13.5" fill="#4db3dc" fill-opacity="0.4" stroke="#58b4dd" stroke-opacity="0.7" stroke-width=".9"/><circle cx="33.4" cy="50.3" r="9.7" fill="none" stroke="#58b4dd" stroke-opacity="0.7" stroke-width=".6"/><circle cx="33.4" cy="50.3" r="4.7" fill="#4db3dc" fill-opacity="0.32"/><circle cx="96.1" cy="49" r="13.5" fill="#4db3dc" fill-opacity="0.22" stroke="#58b4dd" stroke-opacity="0.65" stroke-width=".9"/><circle cx="96.1" cy="49" r="9.7" fill="none" stroke="#58b4dd" stroke-opacity="0.65" stroke-width=".6"/><circle cx="96.1" cy="49" r="4.7" fill="#4db3dc" fill-opacity="0.18"/><path d="M2 10.500C5 5.500 9 6 12 9.500S16 11.500 20 10.500L24 8.500L26 11L29 8L31 10.500L34 8.500L37 10.500L40 8L44 10L48 9L52 8.500L56 9.500L61 8" stroke="#3f53a6" fill="none" stroke-linecap="round" stroke-linejoin="round" stroke-width=".7"/><path d="M20 0L22 -4" stroke="#3f53a6" fill="none" stroke-linecap="round" stroke-linejoin="round" stroke-width=".5"/><path d="M89 0.500L90.500 6L92.500 0L94 6.500L95.500 1" stroke="#3f53a6" fill="none" stroke-linecap="round" stroke-linejoin="round" stroke-width="1.100"/><path d="M100 11L102 7.500L103.500 10.500L106 7L107 10.500M110 10.500L112 6L113.500 10L116 8.500L118 10L120 8.500L122 10L125 9L128 10" stroke="#3f53a6" fill="none" stroke-linecap="round" stroke-linejoin="round" stroke-width=".8"/><path d="M72 41L74 38.500L75.500 41L78 38.500L80 41M83 41L85 38L87 41L89 38.500L91 41L93 39M97 41L99 38L100.500 41.500M104 41L106 38.500L108 41L110 39L112 41L114 39L116 41M119 41L121 38.500L123 40.500L125 39" stroke="#3f53a6" fill="none" stroke-linecap="round" stroke-linejoin="round" stroke-width=".8"/><path d="M22 48L23 54L25 47L27 55L29 48L31 54M36 52L38 48L40 53M42 52L44 49L46 52L48 50L50 52.500L53 49L55 51.500L58 49L60 51" stroke="#3f53a6" fill="none" stroke-linecap="round" stroke-linejoin="round" stroke-width=".9"/><path d="M74 56.500L86 51.500L94 50M102 52L104 47.500L106 52M108 52L110 48L112 52L114 50L116 52L118 50L120 52L123 49.500" stroke="#3f53a6" fill="none" stroke-linecap="round" stroke-linejoin="round" stroke-width=".9"/><path d="M74 57.500L90 52" stroke="#3f53a6" fill="none" stroke-linecap="round" stroke-linejoin="round" stroke-width=".5"/></g><path d="M135.500 0V85" stroke="#c8c8c8" stroke-width="1"/></svg>
 <div style="position:absolute;left:142px;top:10px;width:136px;height:85px;background:#f0f0f0"></div>
 <svg style="position:absolute;left:169px;top:21px" width="26" height="26" viewBox="0 0 26 26"><path fill="#337ab7" d="M5.500 16.500A5 5 0 0 1 4.800 6.600A6.800 6.800 0 0 1 17.600 4.700A5.200 5.200 0 0 1 25.300 9.300A4.600 4.600 0 0 1 21 16.500H16.500V12H9.500V16.500Z"/><path fill="#337ab7" d="M10.800 13.300H15.200V19H19L13 25L7 19H10.800Z"/></svg>
 <div style="position:absolute;left:201.500px;top:18px;font-size:23.400px;line-height:26px;color:#337ab7">PDF</div>
 <p style="top:100px">Заданию назначили организацию:<br>"Бригада 10".</p>
 <p style="top:150px">Заданию назначили исполнителя:<br>"Куликов Михаил".</p>
 <p style="top:200px">При создании задания к нему были<br>прикреплены файлы.</p>
 <p style="top:250px">Было установлено главное фото<br>задания.</p>
 <div class="tm"><svg width="10" height="10" viewBox="0 0 10 10" style="vertical-align:-1px;margin-right:4px"><path d="M0.800 5.500L3.300 8.800L9 0.800" fill="none" stroke="#999" stroke-width="1.200"/></svg>10:55</div>
</div></div>
<svg style="position:absolute;left:1145px;top:398px" width="30" height="26" viewBox="0 0 30 26"><path fill="#777" d="M15.200 6.900L22.100 12.500L15.200 17.900V13.900C12.800 13.900 10.500 14.600 8.200 16.800C8.600 13 11 10 15.200 9.900Z"/></svg>
<svg style="position:absolute;left:835px;top:645px" width="24" height="28" viewBox="0 0 24 28"><g transform="matrix(0.7071,-0.7071,0.7071,0.7071,0,0)"><path fill="none" stroke="#2f77b8" stroke-width="1.250" stroke-linecap="round" d="M-8.080 23.480L1.300 23.480A3.650 3.650 0 0 0 1.300 16.180L-9.300 16.180A2.610 2.610 0 0 0 -9.300 21.400L0.520 21.400A1.570 1.570 0 0 0 0.520 18.270L-6.260 18.270"/></g></svg>
<div id="cmt">Для отправки комментария нажмите Enter.<svg class="grip" viewBox="0 0 15 15"><path d="M2.500 14L14 2.500M6.500 14L14 6.500M10.500 14L14 10.500" stroke="#6b6b6b" stroke-width="1.100" fill="none"/></svg></div>

<div id="frame"></div>
</body>
</html>
